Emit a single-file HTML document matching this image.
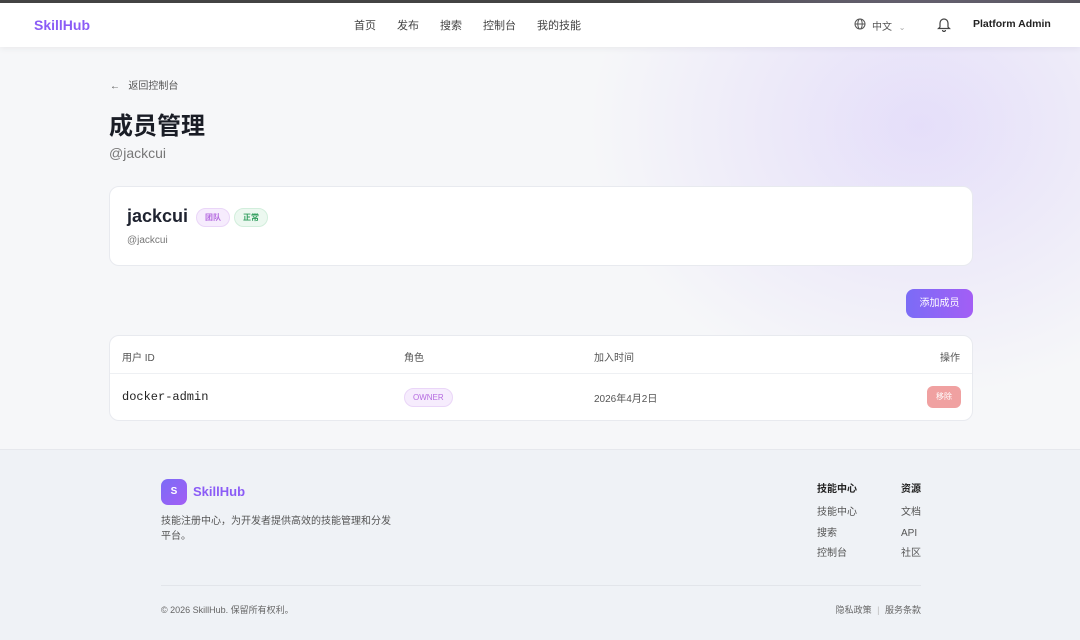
<!DOCTYPE html>
<html><head><meta charset="utf-8"><style>
*{box-sizing:border-box;margin:0;padding:0}
body{width:1080px;height:640px;overflow:hidden;font-family:"Liberation Sans","Noto Sans CJK SC",sans-serif;background:#f6f7f9;position:relative;color:#1f2330}
.topbar{position:absolute;top:0;left:0;width:1080px;height:3px;background:#444}
.nav{position:absolute;top:3px;left:0;width:1080px;height:44px;background:#fff;box-shadow:0 2px 6px rgba(0,0,0,.05);z-index:2}
.logo{position:absolute;left:34px;top:14px;font-size:14px;font-weight:bold;color:#8b5cf6}
.links{position:absolute;left:354px;top:14px;font-size:11px;color:#444}
.links span{margin-right:21px}
.glow{position:absolute;left:560px;top:0px;width:600px;height:420px;background:radial-gradient(ellipse at 60% 30%,rgba(205,188,250,.42),rgba(240,238,252,0) 65%)}
.abs{position:absolute}
.card{position:absolute;background:#fff;border:1px solid #e8eaef;border-radius:10px}
.tag{display:inline-block;font-size:8px;padding:3px 8px;border-radius:10px;vertical-align:middle;margin-left:4px}
.footer{position:absolute;left:0;top:449px;width:1080px;height:191px;background:#eff2f6;border-top:1px solid #e6e8ed}
.f{font-size:10px;color:#555}
</style></head><body>
<div class="topbar"></div>
<div class="glow"></div>
<div class="nav">
<div class="logo">SkillHub</div>
<div class="links"><span>首页</span><span>发布</span><span>搜索</span><span>控制台</span><span>我的技能</span></div>
<svg class="abs" style="left:854px;top:15px" width="12" height="12" viewBox="0 0 12 12" fill="none" stroke="#555" stroke-width="1"><circle cx="6" cy="6" r="5"/><ellipse cx="6" cy="6" rx="2.2" ry="5"/><path d="M1 6h10"/></svg>
<div class="abs" style="left:872px;top:15px;font-size:10px;color:#555">中文 <span style="color:#aaa;font-size:8px;margin-left:4px">⌄</span></div>
<svg class="abs" style="left:937px;top:13px" width="14" height="16" viewBox="0 0 14 16" fill="none" stroke="#444" stroke-width="1.2"><path d="M3 11V7a4 4 0 0 1 8 0v4l1.5 1.5h-11z"/><path d="M5.5 14a1.5 1.5 0 0 0 3 0"/></svg>
<div class="abs" style="left:973px;top:15px;font-size:10.5px;font-weight:bold;color:#222">Platform Admin</div>
</div>
<div class="abs" style="left:110px;top:77px;font-size:10px;color:#555">←&nbsp;&nbsp; 返回控制台</div>
<div class="abs" style="left:109px;top:106px;font-size:24px;font-weight:bold;color:#1a1d26">成员管理</div>
<div class="abs" style="left:109px;top:145px;font-size:14px;color:#777">@jackcui</div>
<div class="card" style="left:109px;top:186px;width:864px;height:80px">
<div class="abs" style="left:17px;top:19px;font-size:18px;font-weight:bold">jackcui<span class="tag" style="margin-left:8px;background:#f6ecfd;color:#b56be0;border:1px solid #ead6f8">团队</span><span class="tag" style="background:#ecf8f0;color:#2f9d5c;border:1px solid #d2eedc">正常</span></div>
<div class="abs" style="left:17px;top:48px;font-size:10px;color:#777">@jackcui</div>
</div>
<div class="abs" style="left:906px;top:289px;width:67px;height:29px;border-radius:8px;background:linear-gradient(90deg,#7b6cf6,#a35ef5);color:#fff;font-size:10px;text-align:center;line-height:29px">添加成员</div>
<div class="card" style="left:109px;top:335px;width:864px;height:86px">
<div class="abs" style="left:0;top:37px;width:862px;height:1px;background:#eef0f3"></div>
<div class="abs" style="left:12px;top:13px;font-size:10px;color:#555">用户 ID</div>
<div class="abs" style="left:294px;top:13px;font-size:10px;color:#555">角色</div>
<div class="abs" style="left:484px;top:13px;font-size:10px;color:#555">加入时间</div>
<div class="abs" style="right:12px;top:13px;font-size:10px;color:#555">操作</div>
<div class="abs" style="left:12px;top:54px;font-size:12px;font-family:'Liberation Mono',monospace;color:#222">docker-admin</div>
<div class="abs" style="left:294px;top:52px;font-size:8px;padding:4px 8px;border-radius:10px;background:#f6ecfd;color:#b56be0;border:1px solid #ead6f8">OWNER</div>
<div class="abs" style="left:484px;top:54px;font-size:10px;color:#555">2026年4月2日</div>
<div class="abs" style="left:817px;top:50px;width:34px;height:22px;border-radius:6px;background:#f0a1a1;color:#fff;font-size:8px;text-align:center;line-height:22px">移除</div>
</div>
<div class="footer">
<div class="abs" style="left:161px;top:29px;width:26px;height:26px;border-radius:7px;background:linear-gradient(135deg,#7b6cf6,#a35ef5);color:#fff;font-size:10px;font-weight:bold;text-align:center;line-height:26px">S</div>
<div class="abs" style="left:193px;top:34px;font-size:13px;font-weight:bold;color:#8b5cf6">SkillHub</div>
<div class="abs f" style="left:161px;top:64px;width:230px;line-height:15px">技能注册中心，为开发者提供高效的技能管理和分发平台。</div>
<div class="abs" style="left:817px;top:30px;font-size:10px;font-weight:bold;color:#222">技能中心</div>
<div class="abs f" style="left:817px;top:53px;line-height:20.5px">技能中心<br>搜索<br>控制台</div>
<div class="abs" style="left:901px;top:30px;font-size:10px;font-weight:bold;color:#222">资源</div>
<div class="abs f" style="left:901px;top:53px;line-height:20.5px">文档<br>API<br>社区</div>
<div class="abs" style="left:161px;top:135px;width:760px;height:1px;background:#e2e5ea"></div>
<div class="abs" style="left:161px;top:153px;font-size:9px;color:#666">© 2026 SkillHub. 保留所有权利。</div>
<div class="abs" style="right:159px;top:153px;font-size:9px;color:#666">隐私政策 <span style="color:#bbb;margin:0 3px">|</span> 服务条款</div>
</div>
</body></html>
